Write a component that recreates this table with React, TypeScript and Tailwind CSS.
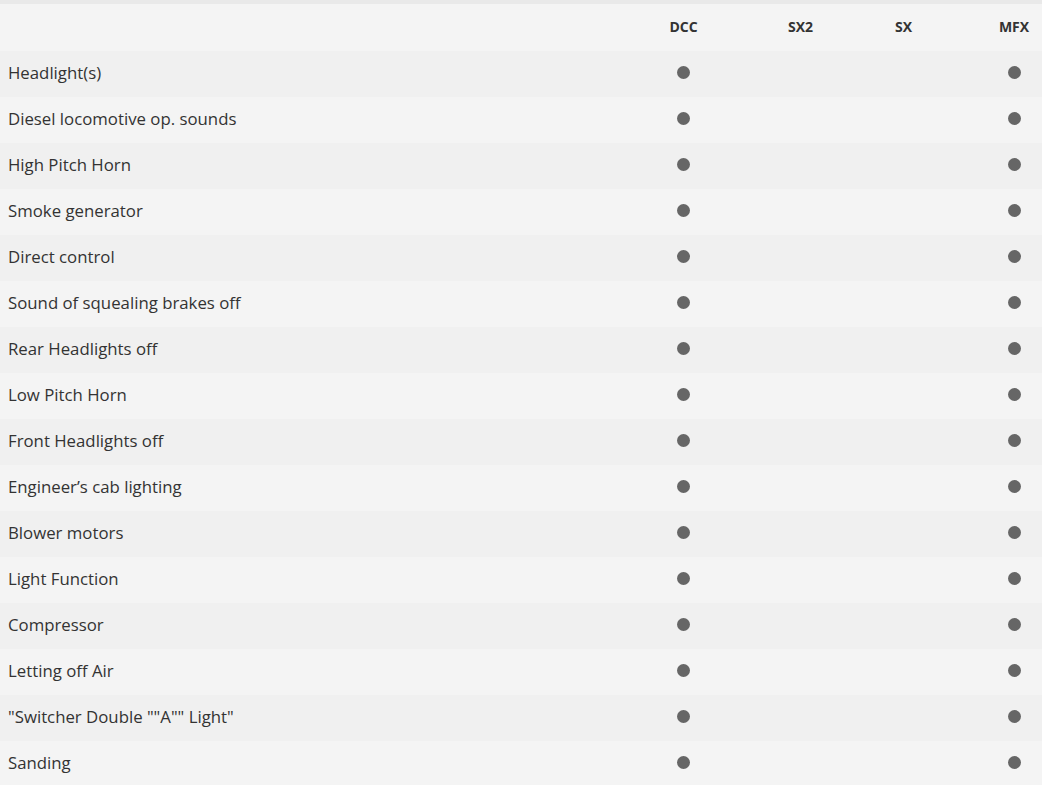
const rows = [
  "Headlight(s)",
  "Diesel locomotive op. sounds",
  "High Pitch Horn",
  "Smoke generator",
  "Direct control",
  "Sound of squealing brakes off",
  "Rear Headlights off",
  "Low Pitch Horn",
  "Front Headlights off",
  "Engineer’s cab lighting",
  "Blower motors",
  "Light Function",
  "Compressor",
  "Letting off Air",
  "\"Switcher Double \"\"A\"\" Light\"",
  "Sanding",
]

function Dot() {
  return <span className="block w-[13px] h-[13px] rounded-full bg-[#666] mb-[3px]" />
}

export default function App() {
  return (
    <div className="w-[1042px] h-[785px] overflow-hidden bg-[#f4f4f4] font-['Open_Sans',sans-serif] text-[#333]">
      <div className="h-[4px] bg-[#e9e9e9]" />
      <div className="grid grid-cols-[1fr_193px_41px_165px_56px] h-[47px] items-center text-[14px] font-bold text-[#333]">
        <div />
        <div className="text-center pb-[2px]">DCC</div>
        <div className="text-center pb-[2px]">SX2</div>
        <div className="text-center pb-[2px]">SX</div>
        <div className="text-center pb-[2px]">MFX</div>
      </div>
      {rows.map((label, i) => (
        <div
          key={i}
          className={
            "grid grid-cols-[1fr_193px_41px_165px_56px] h-[46px] items-center text-[16.8px] " +
            (i % 2 === 0 ? "bg-[#f0f0f0]" : "bg-[#f4f4f4]")
          }
        >
          <div className="pl-[8px] pb-[2px]">{label}</div>
          <div className="flex justify-center"><Dot /></div>
          <div />
          <div />
          <div className="flex justify-center"><Dot /></div>
        </div>
      ))}
    </div>
  )
}
